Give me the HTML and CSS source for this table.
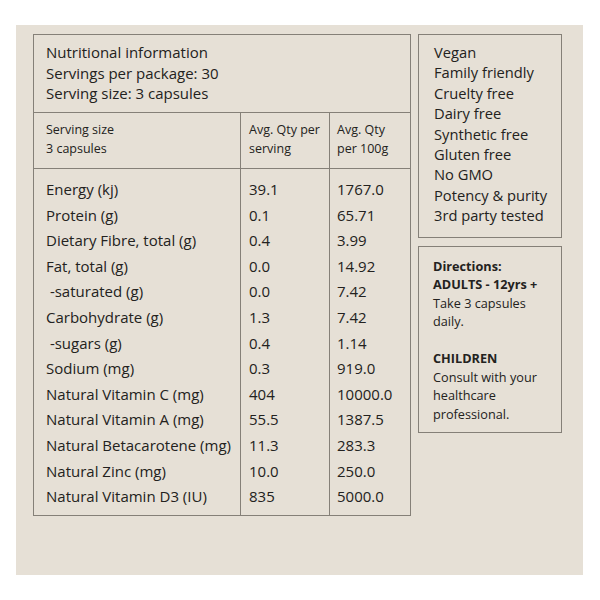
FILE: index.html
```html
<!DOCTYPE html>
<html lang="en">
<head>
<meta charset="utf-8">
<title>Nutritional information</title>
<link rel="stylesheet" href="styles.css">
</head>
<body>
<div class="panel">
  <table class="nutrition">
    <colgroup>
      <col class="w1">
      <col class="w2">
      <col class="w3">
    </colgroup>
    <thead>
      <tr>
        <th colspan="3" class="title">Nutritional information<br>Servings per package: 30<br>Serving size: 3 capsules</th>
      </tr>
      <tr class="colheads">
        <th class="c1">Serving size<br>3 capsules</th>
        <th class="c2">Avg. Qty per<br>serving</th>
        <th class="c3">Avg. Qty<br>per 100g</th>
      </tr>
    </thead>
    <tbody>
      <tr><td class="c1">Energy (kj)</td><td class="c2">39.1</td><td class="c3">1767.0</td></tr>
      <tr><td class="c1">Protein (g)</td><td class="c2">0.1</td><td class="c3">65.71</td></tr>
      <tr><td class="c1">Dietary Fibre, total (g)</td><td class="c2">0.4</td><td class="c3">3.99</td></tr>
      <tr><td class="c1">Fat, total (g)</td><td class="c2">0.0</td><td class="c3">14.92</td></tr>
      <tr><td class="c1">&nbsp;-saturated (g)</td><td class="c2">0.0</td><td class="c3">7.42</td></tr>
      <tr><td class="c1">Carbohydrate (g)</td><td class="c2">1.3</td><td class="c3">7.42</td></tr>
      <tr><td class="c1">&nbsp;-sugars (g)</td><td class="c2">0.4</td><td class="c3">1.14</td></tr>
      <tr><td class="c1">Sodium (mg)</td><td class="c2">0.3</td><td class="c3">919.0</td></tr>
      <tr><td class="c1">Natural Vitamin C (mg)</td><td class="c2">404</td><td class="c3">10000.0</td></tr>
      <tr><td class="c1">Natural Vitamin A (mg)</td><td class="c2">55.5</td><td class="c3">1387.5</td></tr>
      <tr><td class="c1">Natural Betacarotene (mg)</td><td class="c2">11.3</td><td class="c3">283.3</td></tr>
      <tr><td class="c1">Natural Zinc (mg)</td><td class="c2">10.0</td><td class="c3">250.0</td></tr>
      <tr><td class="c1">Natural Vitamin D3 (IU)</td><td class="c2">835</td><td class="c3">5000.0</td></tr>
    </tbody>
  </table>
  <div class="side">
    <ul class="claims">
      <li>Vegan</li>
      <li>Family friendly</li>
      <li>Cruelty free</li>
      <li>Dairy free</li>
      <li>Synthetic free</li>
      <li>Gluten free</li>
      <li>No GMO</li>
      <li>Potency &amp; purity</li>
      <li>3rd party tested</li>
    </ul>
    <div class="directions">
      <p><strong>Directions:</strong><br><strong>ADULTS - 12yrs +</strong><br>Take 3 capsules daily.</p>
      <p><strong>CHILDREN</strong><br>Consult with your healthcare professional.</p>
    </div>
  </div>
</div>
</body>
</html>
```

FILE: styles.css
```css
* { box-sizing: border-box; }
html, body { margin: 0; padding: 0; background: #ffffff; }
body {
  font-family: "Open Sans", "DejaVu Sans", sans-serif;
  color: #232220;
}
.panel {
  margin: 25px 17px 0 16px;
  height: 550px;
  background: #e6e0d6;
  padding: 9px 0 0 17px;
  display: flex;
  align-items: flex-start;
  gap: 7px;
}
.nutrition {
  border-collapse: collapse;
  border: 1px solid #858078;
  width: 377px;
  table-layout: fixed;
}
.w1 { width: 207px; }
.w2 { width: 89px; }
.w3 { width: 81px; }
.nutrition th, .nutrition td {
  font-weight: 400;
  text-align: left;
  vertical-align: top;
  padding: 0;
}
.nutrition .title {
  font-size: 15px;
  line-height: 20.5px;
  padding: 7px 12px 8px 12px;
  border-bottom: 1px solid #858078;
}
.colheads th {
  font-size: 12.5px;
  line-height: 19px;
  padding: 7px 4px 10px 8px;
  border-bottom: 1px solid #858078;
}
.c1 { padding-left: 12px !important; border-right: 1px solid #858078; }
.c2 { padding-left: 8px !important; border-right: 1px solid #858078; }
.c3 { padding-left: 7px !important; }
.nutrition td {
  font-size: 15px;
  line-height: 25.6px;
  white-space: nowrap;
}
.nutrition tbody tr:first-child td { padding-top: 8.5px; }
.nutrition tbody tr:last-child td { padding-bottom: 5.5px; }
.side {
  width: 144px;
  display: flex;
  flex-direction: column;
  gap: 8px;
}
.claims {
  list-style: none;
  margin: 0;
  padding: 7px 8px 11px 15px;
  border: 1px solid #858078;
  font-size: 14.7px;
  line-height: 20.4px;
}
.directions {
  border: 1px solid #858078;
  padding: 10px 8px 9px 14px;
  font-size: 12.7px;
  line-height: 18.5px;
}
.directions p { margin: 0; }
.directions p + p { margin-top: 18.5px; }
.directions strong { font-weight: 700; }
```
